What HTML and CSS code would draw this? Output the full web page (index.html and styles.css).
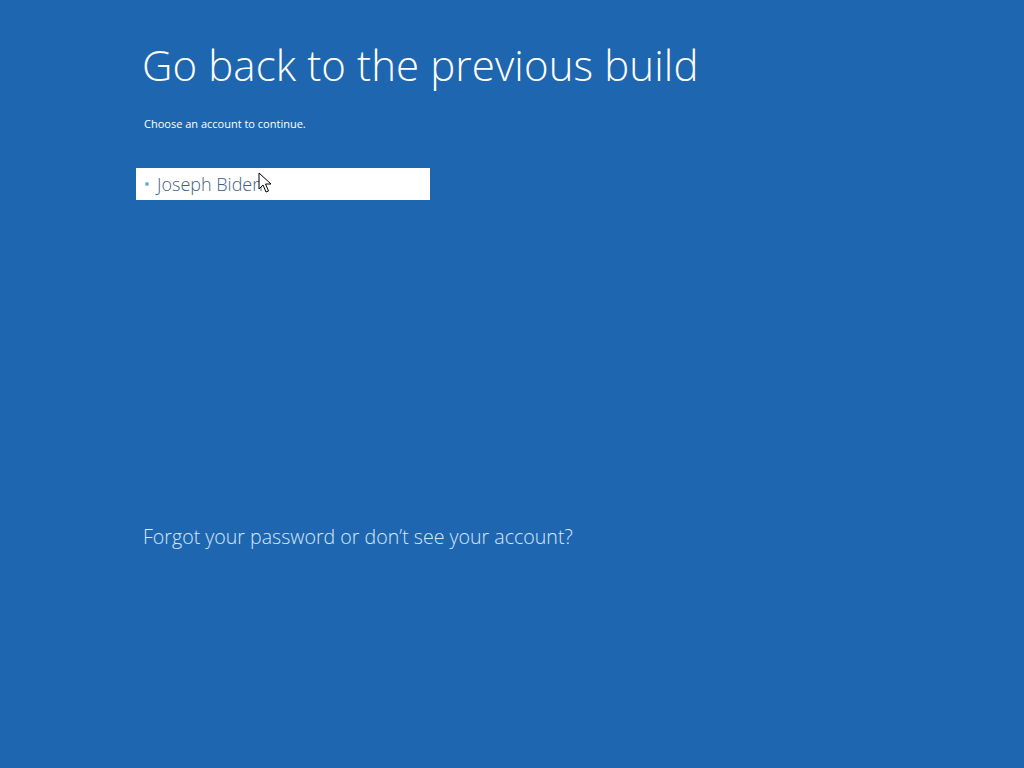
FILE: index.html
```html
<!DOCTYPE html>
<html lang="en">
<head>
  <meta charset="UTF-8" />
  <title>Go back to the previous build</title>
  <link rel="stylesheet" href="styles.css">
</head>
<body>
  <div class="screen">
    <h1 class="title">Go back to the previous build</h1>
    <p class="subtitle">Choose an account to continue.</p>

    <div class="accounts">
      <div class="account">
        <span class="dot"></span>
        <span class="name">Joseph Biden</span>
        <svg class="cursor" width="14" height="22" viewBox="0 0 14 22">
          <path d="M1 1 L1 17 L5 13 L8 20 L10.5 19 L7.5 12 L13 12 Z" fill="#fff" stroke="#000" stroke-width="1" stroke-linejoin="miter"/>
        </svg>
      </div>
    </div>

    <a class="forgot" href="#">Forgot your password or don’t see your account?</a>
  </div>
</body>
</html>
```

FILE: styles.css
```css
html, body {
  margin: 0;
  padding: 0;
  height: 100%;
}

body {
  background-color: #1f66b0;
  font-family: "Open Sans", "Liberation Sans", sans-serif;
  color: #fff;
}

.screen {
  padding: 36px 0 0 136px;
}

.title {
  margin: 0 0 0 6px;
  font-size: 42px;
  font-weight: 300;
  line-height: 58px;
  letter-spacing: 0.1px;
}

.subtitle {
  margin: 22px 0 0 8px;
  font-size: 11px;
  line-height: 16px;
}

.accounts {
  margin-top: 36px;
}

.account {
  position: relative;
  display: flex;
  align-items: center;
  width: 294px;
  height: 32px;
  background: #fff;
  box-sizing: border-box;
  padding-left: 9px;
}

.dot {
  width: 4px;
  height: 4px;
  border-radius: 50%;
  background: #6fb0dc;
  margin-right: 8px;
}

.name {
  font-size: 18px;
  font-weight: 300;
  color: #3f5f80;
  line-height: 32px;
}

.cursor {
  position: absolute;
  left: 122px;
  top: 4px;
}

.forgot {
  display: inline-block;
  margin: 323px 0 0 7px;
  font-size: 19.6px;
  font-weight: 300;
  color: #d6e8fa;
  text-decoration: none;
}
```
